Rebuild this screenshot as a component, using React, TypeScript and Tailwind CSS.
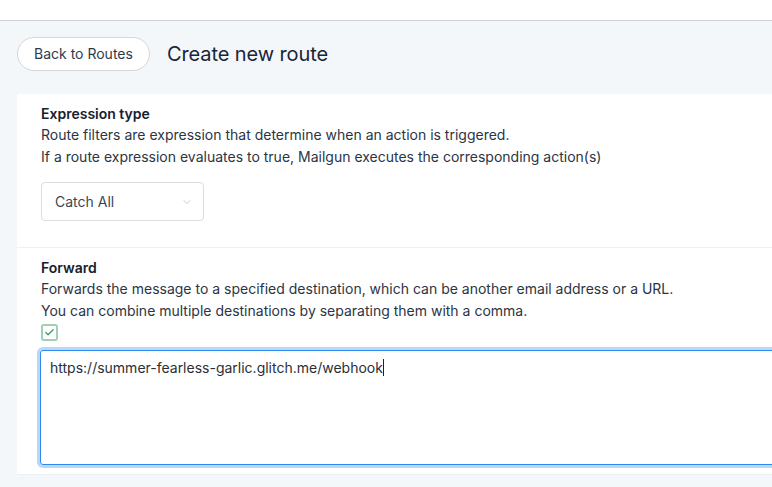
import { ChevronDown, Check } from "lucide-react";

export default function App() {
  return (
    <div className="w-[772px] h-[487px] overflow-hidden bg-[#f4f7fa] font-['Inter',sans-serif] text-[#1f2d3d]">
      <div className="h-[21px] bg-white border-b border-[#cfd2d6]" />

      <div className="pl-[17px]">
        <div className="flex items-center gap-[17px] pt-[16px] h-[49px]">
          <button className="h-[34px] px-4 rounded-full border border-[#d4d7dc] bg-white text-[14px] text-[#2d3b4e]">
            Back to Routes
          </button>
          <h1 className="text-[20px] text-[#18253a] tracking-[-0.1px]">Create new route</h1>
        </div>

        <div className="mt-[24px] w-[900px] bg-white">
          <section className="pl-6 pt-[10px] pb-[26px] border-b border-[#eef0f2]">
            <h2 className="text-[14px] font-semibold leading-[20px] text-[#16202e]">Expression type</h2>
            <p className="text-[14px] leading-[22px] text-[#2b3544]">
              Route filters are expression that determine when an action is triggered.
              <br />
              If a route expression evaluates to true, Mailgun executes the corresponding action(s)
            </p>
            <div className="mt-[14px] w-[163px] h-[39px] rounded border border-[#dadde2] flex items-center justify-between pl-[13px] pr-[10px]">
              <span className="text-[14px] text-[#3c4656]">Catch All</span>
              <ChevronDown size={12} strokeWidth={1.5} className="text-[#b3b8c0]" />
            </div>
          </section>

          <section className="pl-6 pt-[10px] pb-[9px] border-b border-[#eef0f2]">
            <h2 className="text-[14px] font-semibold leading-[20px] text-[#16202e]">Forward</h2>
            <p className="text-[14px] leading-[22px] text-[#2b3544]">
              Forwards the message to a specified destination, which can be another email address or a URL.
              <br />
              You can combine multiple destinations by separating them with a comma.
            </p>
            <div className="mt-[2px] w-[17px] h-[17px] rounded-[3px] border-2 border-[#9fcfb4] flex items-center justify-center">
              <Check size={11} strokeWidth={3} className="text-[#4b9b6e]" />
            </div>
            <div className="mt-[9px] -ml-px w-[860px] h-[115px] rounded-[3px] border border-[#2a8bf2] ring-[3px] ring-[#bcd7f5] pl-[9px] pt-[6px] text-[14px] text-[#2a2f37]">
              https://summer-fearless-garlic.glitch.me/webhook
              <span className="inline-block w-px h-[17px] bg-[#222] align-[-3px]" />
            </div>
          </section>
        </div>
      </div>
    </div>
  );
}
